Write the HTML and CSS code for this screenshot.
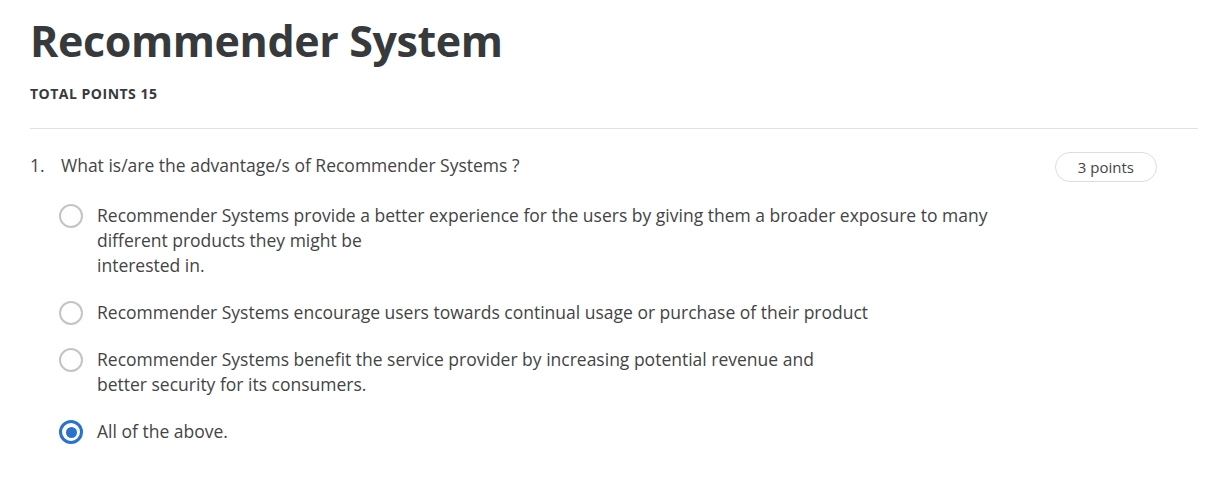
FILE: index.html
```html
<!DOCTYPE html>
<html lang="en">
<head>
<meta charset="utf-8">
<title>Recommender System</title>
<link rel="stylesheet" href="styles.css">
</head>
<body>
<main class="quiz">
  <h1 class="title">Recommender System</h1>
  <div class="total">TOTAL POINTS 15</div>
  <hr class="divider">
  <section class="question">
    <div class="question-row">
      <span class="qnum">1.</span>
      <span class="qtext">What is/are the advantage/s of Recommender Systems ?</span>
      <span class="points">3 points</span>
    </div>
    <ul class="options">
      <li class="option"><span class="radio"></span><span class="otext">Recommender Systems provide a better experience for the users by giving them a broader exposure to many<br>different products they might be<br>interested in.</span></li>
      <li class="option"><span class="radio"></span><span class="otext">Recommender Systems encourage users towards continual usage or purchase of their product</span></li>
      <li class="option"><span class="radio"></span><span class="otext">Recommender Systems benefit the service provider by increasing potential revenue and<br>better security for its consumers.</span></li>
      <li class="option"><span class="radio checked"></span><span class="otext">All of the above.</span></li>
    </ul>
  </section>
</main>
</body>
</html>
```
FILE: styles.css
```css
html, body {
  margin: 0;
  padding: 0;
  background: #ffffff;
}
body {
  font-family: "Open Sans", "Liberation Sans", sans-serif;
  color: #444444;
}
.quiz {
  padding: 15px 18px 0 30px;
}
.title {
  margin: 0;
  font-size: 43px;
  line-height: 52px;
  letter-spacing: -0.4px;
  font-weight: 700;
  color: #373a3c;
}
.total {
  margin-top: 17px;
  font-size: 14px;
  line-height: 20px;
  letter-spacing: 0.5px;
  font-weight: 700;
  color: #373a3c;
}
.divider {
  margin: 24px 0 0 0;
  border: 0;
  height: 1px;
  background: #e1e1e1;
}
.question {
  margin-top: 24px;
}
.question-row {
  display: flex;
  align-items: flex-start;
  font-size: 17.5px;
  line-height: 24px;
}
.qnum {
  width: 31px;
  flex: none;
}
.qtext {
  flex: 1;
}
.points {
  flex: none;
  margin: -1px 41px 0 0;
  height: 30px;
  box-sizing: border-box;
  padding: 0 22px;
  border: 1px solid #dddddd;
  border-radius: 15px;
  font-size: 15px;
  line-height: 28px;
  color: #444444;
}
.options {
  list-style: none;
  margin: 21px 0 0 29px;
  padding: 0;
  display: flex;
  flex-direction: column;
  gap: 22px;
}
.option {
  display: flex;
  align-items: flex-start;
  gap: 14px;
  font-size: 17.5px;
  line-height: 25px;
}
.radio {
  flex: none;
  width: 24px;
  height: 24px;
  margin-top: 1px;
  box-sizing: border-box;
  border: 2px solid #c4c4c4;
  border-radius: 50%;
  display: flex;
  align-items: center;
  justify-content: center;
}
.radio.checked {
  border: 3px solid #2a73cc;
}
.radio.checked::after {
  content: "";
  width: 11px;
  height: 11px;
  border-radius: 50%;
  background: #2a73cc;
}
```
